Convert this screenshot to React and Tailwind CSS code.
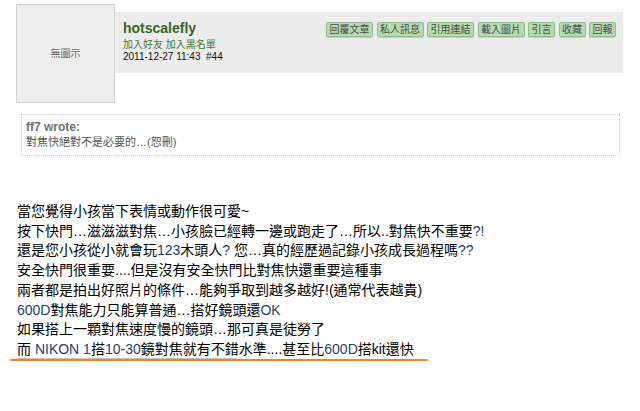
import React from 'react'

const font = { fontFamily: '"Liberation Sans", "Noto Sans CJK TC", sans-serif' }

const buttons = ['回覆文章', '私人訊息', '引用連結', '載入圖片', '引言', '收藏', '回報']

function L({ children }) {
  return <span className="text-[#1f3f78]">{children}</span>
}

export default function App() {
  return (
    <div className="w-[640px] h-[411px] bg-white overflow-hidden text-black" style={font}>
      {/* post header */}
      <div className="flex items-start">
        <div className="ml-[16px] mt-[4px] w-[99px] h-[99px] shrink-0 bg-[#eeeeee] border border-[#d2d2d2] flex items-center justify-center text-[10px] text-[#666]">
          無圖示
        </div>
        <div className="mt-[12px] mr-[17px] flex-1 h-[61px] bg-[#ececec] flex justify-between pl-[8px] pr-[7px]">
          <div className="pt-[8px]">
            <div className="text-[14px] leading-[16px] font-bold text-[#37661c]">hotscalefly</div>
            <div className="mt-[2px] text-[10px] leading-[13px] text-[#3f7a2a]">加入好友&nbsp;加入黑名單</div>
            <div className="text-[10px] leading-[12px] text-[#111]">2011-12-27 11:43&nbsp; #44</div>
          </div>
          <div className="flex gap-[3.5px] pt-[10px] items-start">
            {buttons.map(b => (
              <span
                key={b}
                className="h-[15px] px-[2.5px] text-[10px] leading-[13px] text-[#4a4a4a] bg-[#b6dbb1] border border-[#8dbd88] rounded-[2px] shadow-[0_1px_1px_rgba(0,0,0,0.15)]"
              >
                {b}
              </span>
            ))}
          </div>
        </div>
      </div>

      {/* quote */}
      <div className="ml-[21px] mr-[20px] mt-[11px] h-[42px] border border-dotted border-[#c8c8c8] pl-[4px] pt-[5px]">
        <div className="text-[12px] leading-[14px] font-bold text-[#707070]">ff7 wrote:</div>
        <div className="text-[11px] leading-[16px] text-[#555]">對焦快絕對不是必要的…(恕刪)</div>
      </div>

      {/* body */}
      <div className="pl-[17px] mt-[46px] text-[14px] leading-[19.7px] whitespace-nowrap">
        <div>當您覺得小孩當下表情或動作很可愛~</div>
        <div>按下快門…滋滋滋對焦…小孩臉已經轉一邊或跑走了…所以..對焦快不重要<L>?!</L></div>
        <div>還是您小孩從小就會玩<L>123</L>木頭人<L>?</L> 您…真的經歷過記錄小孩成長過程嗎<L>??</L></div>
        <div>安全快門很重要....但是沒有安全快門比對焦快還重要這種事</div>
        <div>兩者都是拍出好照片的條件…能夠爭取到越多越好!(通常代表越貴)</div>
        <div><L>600D</L>對焦能力只能算普通…搭好鏡頭還<L>OK</L></div>
        <div>如果搭上一顆對焦速度慢的鏡頭…那可真是徒勞了</div>
        <div>而 <L>NIKON 1</L>搭<L>10-30</L>鏡對焦就有不錯水準....甚至比<L>600D</L>搭kit還快</div>
      </div>
      <div className="ml-[17px] w-[220px] h-px bg-[#c4c4c4] -mt-[2px]"></div>
      <div className="ml-[10px] w-[418px] h-[2px] bg-[#f5821f] rounded-full"></div>
    </div>
  )
}
